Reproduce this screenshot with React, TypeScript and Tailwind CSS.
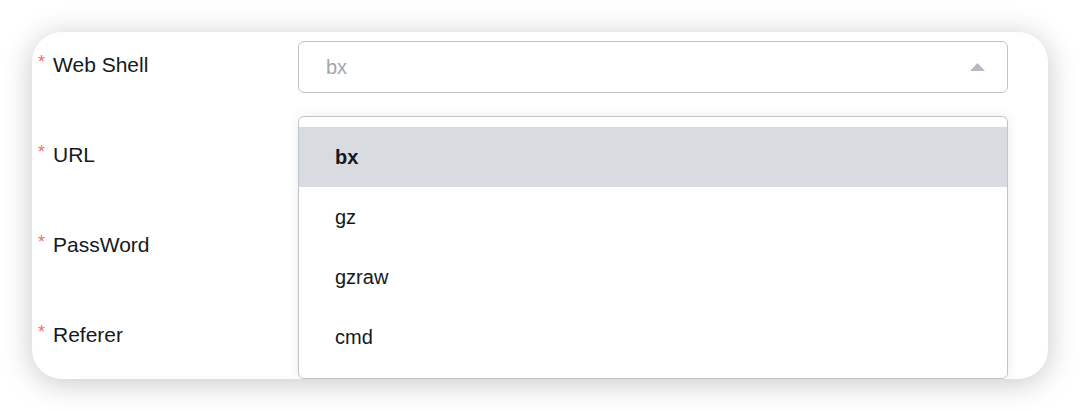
const labels = ["Web Shell", "URL", "PassWord", "Referer"];
const options = ["bx", "gz", "gzraw", "cmd"];

export default function App() {
  return (
    <div
      className="w-[1080px] h-[411px] bg-white pt-[32px] px-[32px] overflow-hidden"
      style={{ fontFamily: '"Liberation Sans", Arial, sans-serif' }}
    >
      <div className="relative h-[347px] rounded-[30px] bg-white overflow-hidden shadow-[0_4px_30px_rgba(0,0,0,0.22)] pl-[6px] pr-[40px] pt-[9px]">
        {labels.map((label, i) => (
          <div key={label} className="flex h-[52px] mb-[38px]">
            <div className="w-[260px] flex items-start leading-[48px] text-[21px] text-[#15181d]">
              <span className="text-[#f56c6c] text-[18px] leading-[42px] mr-[8px]">*</span>
              {label}
            </div>
            {i === 0 && (
              <div className="flex-1 h-[52px] border border-[#bfc3cb] rounded-[6px] flex items-center justify-between pl-[27px] pr-[22px]">
                <span className="text-[20px] text-[#a3a6ad]">bx</span>
                <svg width="15" height="8" viewBox="0 0 15 8">
                  <path d="M7.5 0 L15 8 L0 8 Z" fill="#b4b8c0" />
                </svg>
              </div>
            )}
          </div>
        ))}

        {/* open dropdown */}
        <div className="absolute left-[266px] right-[40px] top-[84px] h-[263px] bg-white border border-[#bfc3cb] rounded-[6px] pt-[10px] shadow-[0_0_12px_rgba(0,0,0,0.08)]">
          {options.map((opt, i) => (
            <div
              key={opt}
              className={
                i === 0
                  ? "h-[60px] flex items-center pl-[36px] bg-[#d8dbe0] text-[20px] font-bold text-[#15181d]"
                  : "h-[60px] flex items-center pl-[36px] text-[20px] text-[#15181d]"
              }
            >
              {opt}
            </div>
          ))}
        </div>
      </div>
    </div>
  );
}
